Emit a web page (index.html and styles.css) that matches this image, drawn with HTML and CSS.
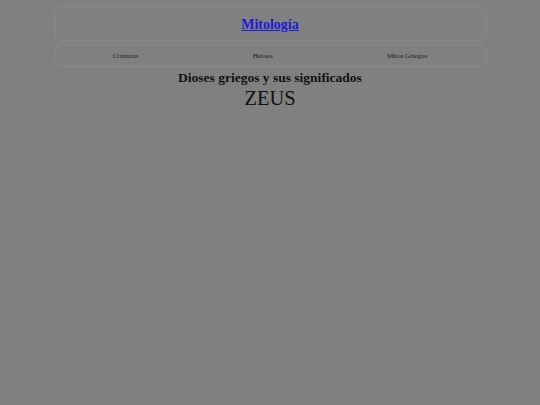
FILE: index.html
```html
<!DOCTYPE html>
<html lang="es">
<head>
<meta charset="utf-8">
<title>Mitología</title>
<link rel="stylesheet" href="styles.css">
</head>
<body>
<header class="site-header">
  <h1 class="site-title"><a href="#">Mitología</a></h1>
</header>
<nav class="site-nav">
  <a href="#">Criaturas</a>
  <a href="#">Héroes</a>
  <a href="#">Mitos Griegos</a>
</nav>
<main class="content">
  <h2 class="page-title">Dioses griegos y sus significados</h2>
  <p class="god-name">ZEUS</p>
</main>
</body>
</html>
```
FILE: styles.css
```css
html, body {
  margin: 0;
  padding: 0;
  background: #808080;
  font-family: "Liberation Serif", "Times New Roman", serif;
  color: #111;
}
body {
  padding-top: 6px;
}
.site-header,
.site-nav {
  width: 429px;
  margin: 0 auto;
  border: 2px solid #858585;
  border-radius: 9px;
  box-shadow: 0 0 2px rgba(145,145,145,0.6);
}
.site-header {
  height: 31px;
  padding-top: 1px;
  box-sizing: content-box;
  display: flex;
  align-items: center;
  justify-content: center;
}
.site-title {
  margin: 0;
  font-size: 14px;
  font-weight: bold;
}
.site-title a {
  color: #1a1adb;
}
.site-nav {
  margin-top: 2px;
  height: 19px;
  display: flex;
  align-items: center;
  justify-content: space-around;
}
.site-nav a {
  font-size: 7px;
  color: #1a1a1a;
  text-decoration: none;
}
.content {
  text-align: center;
}
.page-title {
  margin: 2px 0 0;
  font-size: 13.5px;
  font-weight: bold;
  line-height: 18px;
}
.god-name {
  margin: 0;
  font-size: 20.5px;
  line-height: 22px;
}
```
